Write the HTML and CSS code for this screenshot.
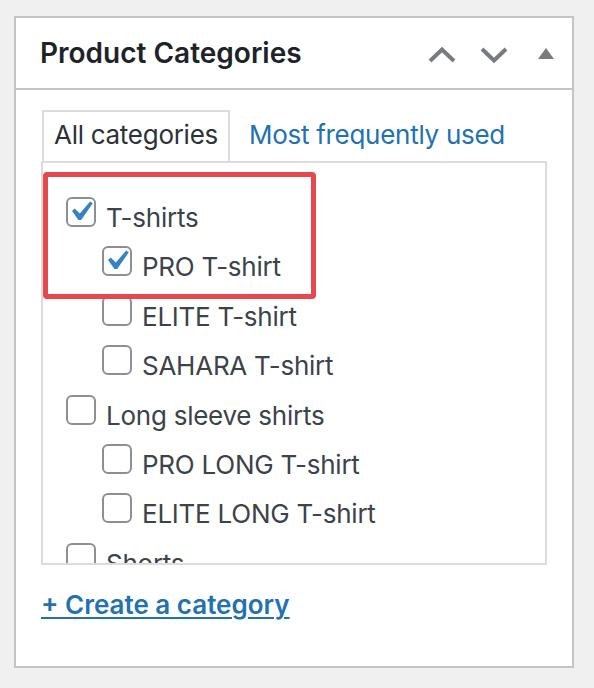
FILE: index.html
```html
<!DOCTYPE html>
<html lang="en">
<head>
<meta charset="utf-8">
<title>Product Categories</title>
<link rel="stylesheet" href="styles.css">
</head>
<body>
<div class="postbox">
  <div class="postbox-header">
    <h2 class="hndle">Product Categories</h2>
    <div class="handle-actions">
      <button class="handle-btn" aria-label="Move up">
        <svg width="28" height="28" viewBox="0 0 28 28"><polyline points="2,22 14,10.5 26,22" fill="none" stroke="#787c82" stroke-width="4"/></svg>
      </button>
      <button class="handle-btn" aria-label="Move down">
        <svg width="28" height="28" viewBox="0 0 28 28"><polyline points="2,10 14,21.5 26,10" fill="none" stroke="#787c82" stroke-width="4"/></svg>
      </button>
      <button class="handle-btn" aria-label="Toggle panel">
        <svg width="16" height="28" viewBox="0 0 16 28"><polygon points="0,20 8,9 16,20" fill="#787c82"/></svg>
      </button>
    </div>
  </div>
  <div class="inside">
    <ul class="category-tabs">
      <li class="tab tab-active">All categories</li>
      <li class="tab"><a class="tab-link" href="#">Most frequently used</a></li>
    </ul>
    <div class="tabs-panel">
      <ul class="checklist">
        <li>
          <label class="item"><svg class="cb" width="30" height="30" viewBox="0 0 30 30"><rect x="1" y="1" width="28" height="28" rx="5" fill="#fff" stroke="#8c8f94" stroke-width="2"/><path transform="translate(-5.56 -5.3) scale(2)" d="M14.83 4.89l1.34.94-5.81 8.38H9.02L5.78 9.67l1.34-1.25 2.58 2.54z" fill="#3582c4"/></svg>T-shirts</label>
          <ul class="children">
            <li><label class="item"><svg class="cb" width="30" height="30" viewBox="0 0 30 30"><rect x="1" y="1" width="28" height="28" rx="5" fill="#fff" stroke="#8c8f94" stroke-width="2"/><path transform="translate(-5.56 -5.3) scale(2)" d="M14.83 4.89l1.34.94-5.81 8.38H9.02L5.78 9.67l1.34-1.25 2.58 2.54z" fill="#3582c4"/></svg>PRO T-shirt</label></li>
            <li><label class="item"><svg class="cb" width="30" height="30" viewBox="0 0 30 30"><rect x="1" y="1" width="28" height="28" rx="5" fill="#fff" stroke="#8c8f94" stroke-width="2"/></svg>ELITE T-shirt</label></li>
            <li><label class="item"><svg class="cb" width="30" height="30" viewBox="0 0 30 30"><rect x="1" y="1" width="28" height="28" rx="5" fill="#fff" stroke="#8c8f94" stroke-width="2"/></svg>SAHARA T-shirt</label></li>
          </ul>
        </li>
        <li>
          <label class="item"><svg class="cb" width="30" height="30" viewBox="0 0 30 30"><rect x="1" y="1" width="28" height="28" rx="5" fill="#fff" stroke="#8c8f94" stroke-width="2"/></svg>Long sleeve shirts</label>
          <ul class="children">
            <li><label class="item"><svg class="cb" width="30" height="30" viewBox="0 0 30 30"><rect x="1" y="1" width="28" height="28" rx="5" fill="#fff" stroke="#8c8f94" stroke-width="2"/></svg>PRO LONG T-shirt</label></li>
            <li><label class="item"><svg class="cb" width="30" height="30" viewBox="0 0 30 30"><rect x="1" y="1" width="28" height="28" rx="5" fill="#fff" stroke="#8c8f94" stroke-width="2"/></svg>ELITE LONG T-shirt</label></li>
          </ul>
        </li>
        <li><label class="item"><svg class="cb" width="30" height="30" viewBox="0 0 30 30"><rect x="1" y="1" width="28" height="28" rx="5" fill="#fff" stroke="#8c8f94" stroke-width="2"/></svg>Shorts</label></li>
      </ul>
      <div class="highlight"></div>
    </div>
    <a class="add-new" href="#">+ Create a category</a>
  </div>
</div>
</body>
</html>
```

FILE: styles.css
```css
html, body {
  margin: 0;
  padding: 0;
  background: #f0f0f1;
}

body {
  font-family: Inter, "Noto Sans", sans-serif;
}

.postbox {
  box-sizing: border-box;
  width: 560px;
  height: 652px;
  margin: 16px 0 0 14px;
  background: #fff;
  border: 2px solid #c3c4c7;
}

.postbox-header {
  display: flex;
  align-items: center;
  justify-content: space-between;
  height: 70px;
  border-bottom: 2px solid #c3c4c7;
}

.hndle {
  margin: 0;
  padding: 0 0 0 24px;
  font-size: 28px;
  line-height: 28px;
  font-weight: 600;
  color: #1d2327;
}

.handle-actions {
  display: flex;
  height: 100%;
}

.handle-btn {
  display: flex;
  align-items: center;
  justify-content: center;
  width: 52px;
  height: 100%;
  padding: 0;
  margin: 0;
  border: 0;
  background: transparent;
}

.handle-btn svg {
  display: block;
}

.inside {
  padding: 0 25px;
}

.category-tabs {
  display: flex;
  align-items: flex-end;
  margin: 20px 0 0;
  padding: 0;
  list-style: none;
}

.tab {
  padding: 5px 10px 9px;
  border: 2px solid transparent;
  border-bottom: 0;
  font-size: 26px;
  line-height: 35px;
  letter-spacing: -0.28px;
}

.tab-active {
  margin-left: 1px;
  border-color: #dcdcde;
  color: #2c3338;
  background: #fff;
}

.tab + .tab {
  margin-left: 7px;
}

.tab-link {
  color: #2271b1;
  text-decoration: none;
}

.tabs-panel {
  position: relative;
  box-sizing: border-box;
  height: 404px;
  padding: 0 23px;
  border: 2px solid #dcdcde;
  overflow: hidden;
}

.checklist,
.children {
  margin: 0;
  padding: 0;
  list-style: none;
}

.checklist {
  padding-top: 30px;
}

.children {
  margin-left: 36px;
}

.checklist li {
  font-size: 26px;
  line-height: 49.4px;
  letter-spacing: -0.25px;
  color: #3c434a;
}

.item {
  display: block;
  white-space: nowrap;
}

.cb {
  vertical-align: baseline;
  margin-right: 10px;
}

.highlight {
  position: absolute;
  left: 0;
  top: 9px;
  box-sizing: border-box;
  width: 273px;
  height: 127px;
  border: 5px solid #e5484d;
  border-radius: 4px;
}

.add-new {
  display: inline-block;
  margin-top: 22px;
  font-size: 26px;
  line-height: 36px;
  font-weight: 600;
  color: #2271b1;
  text-decoration: underline;
  text-decoration-thickness: 2px;
  text-underline-offset: 3px;
}
```
